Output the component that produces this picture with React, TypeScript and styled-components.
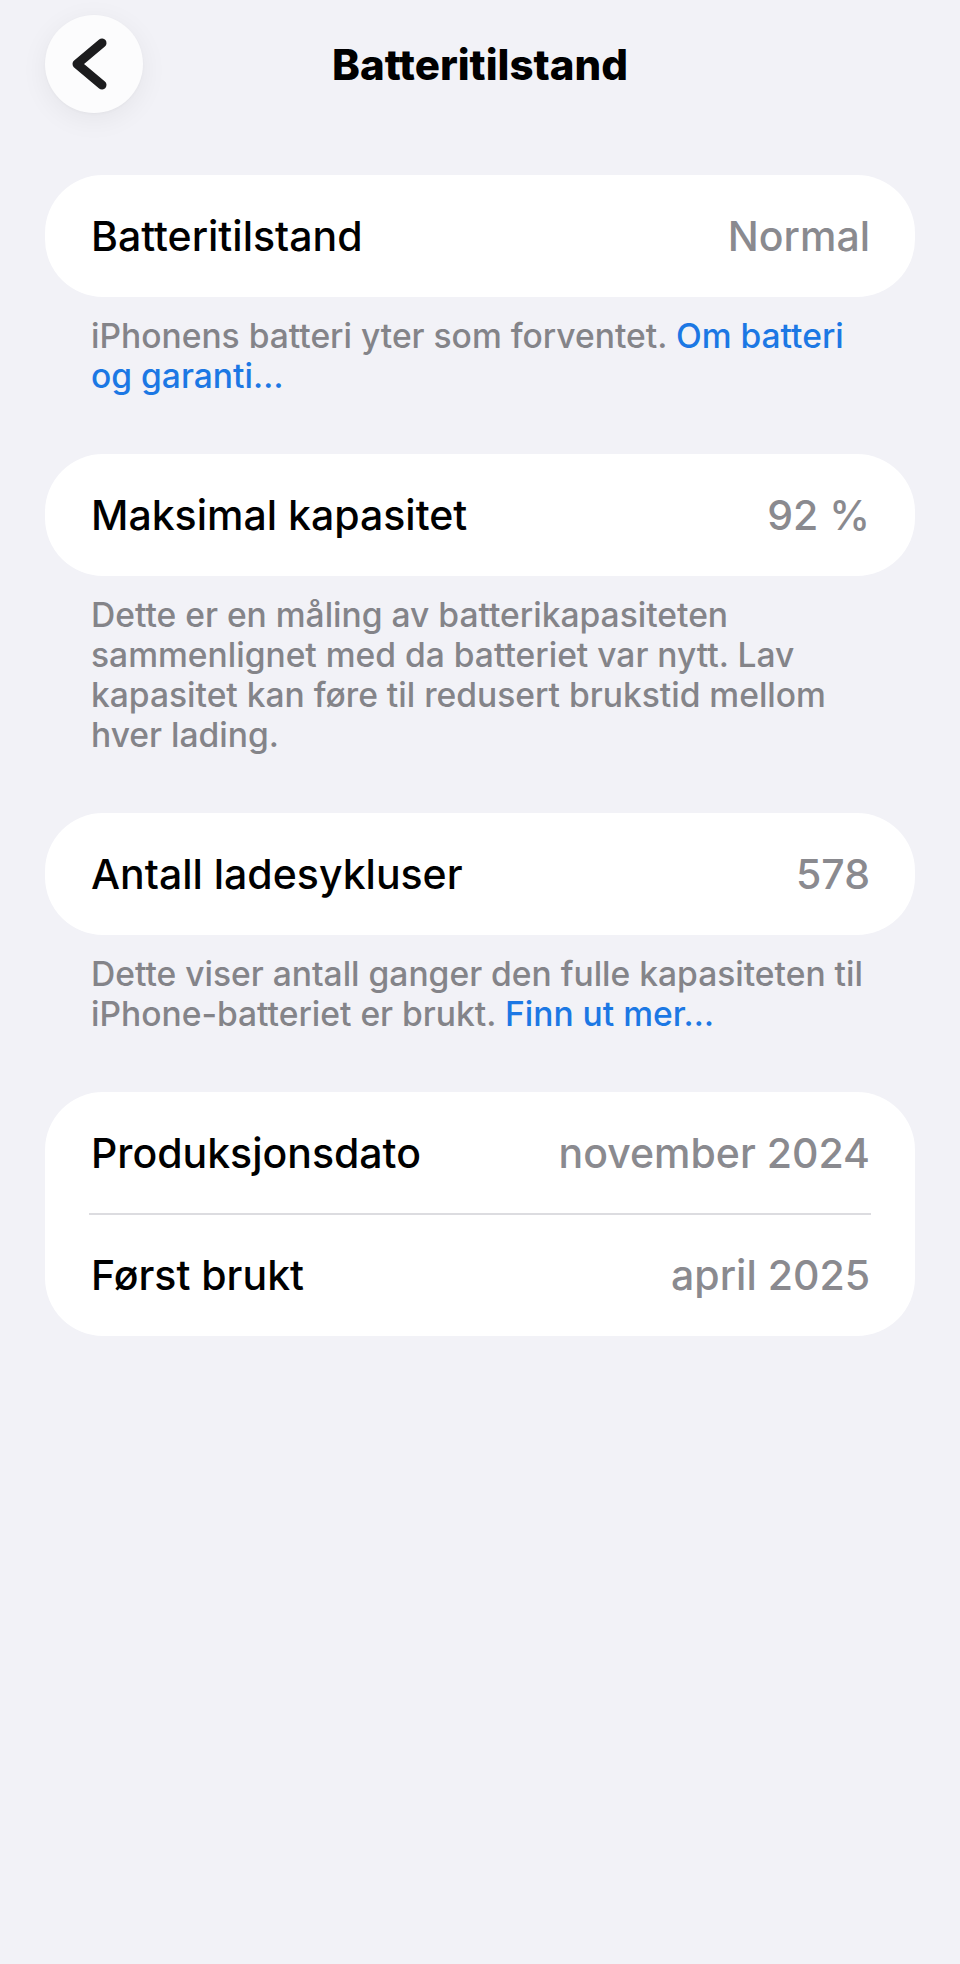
import React from 'react';
import styled, { createGlobalStyle } from 'styled-components';

const c = {
  bg: '#f2f2f7',
  card: '#ffffff',
  text: '#000000',
  value: '#8a8a8f',
  footer: '#848489',
  link: '#1c78e4',
  divider: '#dcdce0',
};

const GlobalStyle = createGlobalStyle`
  html, body {
    margin: 0;
    padding: 0;
    background: ${c.bg};
  }
  body {
    font-family: Inter, "Noto Sans", "Liberation Sans", sans-serif;
    -webkit-font-smoothing: antialiased;
  }
`;

const Page = styled.main`
  min-height: 1964px;
  box-sizing: border-box;
  padding: 15px 45px 0 45px;
  background: ${c.bg};
`;

const Header = styled.header`
  display: grid;
  grid-template-columns: 98px 1fr 98px;
  align-items: center;
  height: 98px;
  margin-bottom: 62px;
`;

const BackButton = styled.button`
  width: 98px;
  height: 98px;
  border-radius: 50%;
  border: none;
  padding: 0;
  background: #fcfcfd;
  box-shadow: 0 6px 28px rgba(0, 0, 0, 0.06), 0 1px 3px rgba(0, 0, 0, 0.03);
  display: flex;
  align-items: center;
  justify-content: center;
  cursor: pointer;
`;

const Title = styled.h1`
  margin: 0;
  text-align: center;
  font-size: 42px;
  font-weight: 800;
  color: ${c.text};
`;

const Card = styled.section`
  background: ${c.card};
  border-radius: 58px;
  overflow: hidden;
`;

const Row = styled.div`
  display: flex;
  align-items: center;
  justify-content: space-between;
  height: 122px;
  padding: 0 45px 0 46px;
  font-size: 41px;
  font-weight: 500;
`;

const Label = styled.span`
  color: ${c.text};
`;

const Value = styled.span`
  color: ${c.value};
`;

const Divider = styled.div`
  height: 2px;
  margin: -1px 44px -1px 44px;
  background: ${c.divider};
`;

const Footer = styled.p`
  margin: 0;
  padding: 19px 46px 58px 46px;
  font-size: 33.6px;
  font-weight: 500;
  line-height: 40px;
  color: ${c.footer};
  white-space: nowrap;
`;

const Link = styled.a`
  color: ${c.link};
  text-decoration: none;
`;

const Chevron = () => (
  <svg width="98" height="98" viewBox="0 0 98 98" fill="none">
    <path
      d="M57 28 L32 49 L57 70"
      stroke="#1c1c1e"
      strokeWidth="9"
      strokeLinecap="round"
      strokeLinejoin="round"
    />
  </svg>
);

export default function App() {
  return (
    <>
      <GlobalStyle />
      <Page>
        <Header>
          <BackButton aria-label="Tilbake">
            <Chevron />
          </BackButton>
          <Title>Batteritilstand</Title>
          <span />
        </Header>

        <Card>
          <Row>
            <Label>Batteritilstand</Label>
            <Value>Normal</Value>
          </Row>
        </Card>
        <Footer>
          iPhonens batteri yter som forventet. <Link>Om batteri</Link>
          <br />
          <Link>og garanti…</Link>
        </Footer>

        <Card>
          <Row>
            <Label>Maksimal kapasitet</Label>
            <Value>92 %</Value>
          </Row>
        </Card>
        <Footer>
          Dette er en måling av batterikapasiteten
          <br />
          sammenlignet med da batteriet var nytt. Lav
          <br />
          kapasitet kan føre til redusert brukstid mellom
          <br />
          hver lading.
        </Footer>

        <Card>
          <Row>
            <Label>Antall ladesykluser</Label>
            <Value>578</Value>
          </Row>
        </Card>
        <Footer>
          Dette viser antall ganger den fulle kapasiteten til
          <br />
          iPhone-batteriet er brukt. <Link>Finn ut mer…</Link>
        </Footer>

        <Card>
          <Row>
            <Label>Produksjonsdato</Label>
            <Value>november 2024</Value>
          </Row>
          <Divider />
          <Row>
            <Label>Først brukt</Label>
            <Value>april 2025</Value>
          </Row>
        </Card>
      </Page>
    </>
  );
}
